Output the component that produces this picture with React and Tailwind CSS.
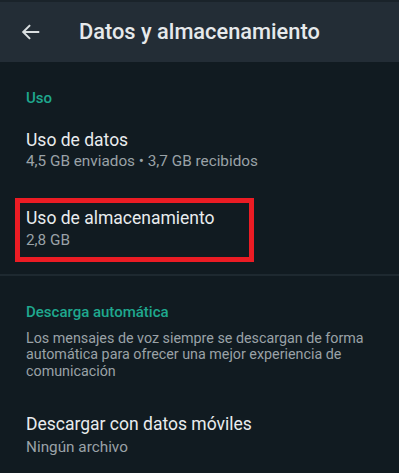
export default function App() {
  return (
    <div className="w-[399px] h-[473px] overflow-hidden bg-[#111b21] font-['Roboto',sans-serif]">
      <div className="h-[62px] bg-[#232d36] border-t-2 border-[#1a232a] flex items-center">
        <svg className="ml-[20px] w-[22px] h-[22px]" viewBox="0 0 24 24" fill="none" stroke="#d9dee0" strokeWidth="2.2">
          <path d="M21 12H4M11 4.5 3.5 12l7.5 7.5" />
        </svg>
        <h1 className="ml-[37px] text-[21.8px] font-medium text-[#e6e9eb]">Datos y almacenamiento</h1>
      </div>

      <div className="px-[26px]">
        <p className="pt-[26px] text-[15px] font-medium text-[#1fa88e] leading-[20px]">Uso</p>

        <div className="mt-[21px]">
          <p className="text-[17.5px] text-[#e9ecee] leading-[22px]">Uso de datos</p>
          <p className="text-[15.3px] text-[#9aa2a7] leading-[21px]">4,5 GB enviados • 3,7 GB recibidos</p>
        </div>
      </div>

      <div className="mt-[26px] ml-[15px] w-[239px] h-[64px] border-[5px] border-[#ec1c24] pl-[6px] pt-[4px]">
        <p className="text-[17.5px] text-[#e9ecee] leading-[22px]">Uso de almacenamiento</p>
        <p className="text-[15.3px] text-[#9aa2a7] leading-[22px]">2,8 GB</p>
      </div>

      <div className="mt-[12px] h-[2px] bg-[#1e2930]"></div>

      <div className="px-[26px]">
        <p className="pt-[26px] text-[15px] font-medium text-[#1fa88e] leading-[20px]">Descarga automática</p>
        <p className="mt-[8px] text-[14.3px] text-[#9aa2a7] leading-[16.3px]">
          Los mensajes de voz siempre se descargan de forma automática para ofrecer una mejor experiencia de comunicación
        </p>

        <div className="mt-[34px]">
          <p className="text-[17.5px] text-[#e9ecee] leading-[22px]">Descargar con datos móviles</p>
          <p className="text-[15.3px] text-[#9aa2a7] leading-[24px]">Ningún archivo</p>
        </div>
      </div>
    </div>
  );
}
